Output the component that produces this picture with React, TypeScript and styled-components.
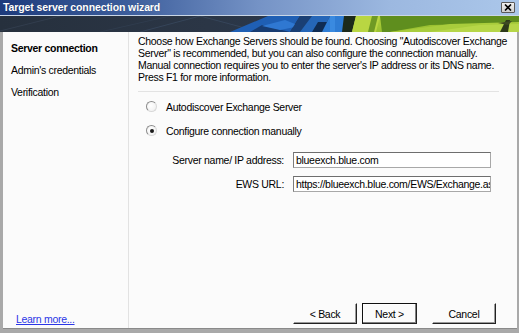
import React from "react";
import styled, { createGlobalStyle } from "styled-components";

const Global = createGlobalStyle`
  html, body { margin: 0; padding: 0; background: #fff; }
  body {
    font-family: "Liberation Sans", Arial, sans-serif;
    font-size: 10.5px;
    letter-spacing: -0.3px;
    color: #000;
  }
  * { box-sizing: border-box; }
`;

const Window = styled.div`
  width: 519px;
  height: 333px;
  display: flex;
  flex-direction: column;
  background: #a9a9a9;
  overflow: hidden;
`;

const TitleBar = styled.div`
  height: 16px;
  flex: none;
  display: flex;
  align-items: center;
  justify-content: space-between;
  padding: 0 4px 1px 3px;
  background: linear-gradient(90deg, #1d3b7c 0%, #3d5e9c 25%, #7593c6 50%, #9cb8e0 75%, #abc7ea 100%);
  border-bottom: 1px solid #c9d6e6;
`;

const Title = styled.span`
  color: #fff;
  font-weight: bold;
  font-size: 10.5px;
  letter-spacing: -0.1px;
  text-shadow: 0 0 1px rgba(0, 0, 0, 0.3);
`;

const CloseButton = styled.div`
  width: 14px;
  height: 11px;
  margin-top: 1px;
  display: flex;
  align-items: center;
  justify-content: center;
  background: linear-gradient(#f2f2f2, #cfcfcf);
  border: 1px solid #5a5a5a;
  border-radius: 1px;
`;

const Banner = styled.svg`
  display: block;
  flex: none;
`;

const Frame = styled.div`
  flex: 1;
  display: flex;
  min-height: 0;
  margin: 0 2px 4px 3px;
  background: #fbfbfb;
  border-bottom: 1px solid #8a8a8a;
`;

const Sidebar = styled.nav`
  width: 126px;
  flex: none;
  display: flex;
  flex-direction: column;
  padding: 10px 0 2px 8px;
  border-right: 1px solid #e2e2e2;
`;

const NavItem = styled.div<{ $active?: boolean }>`
  height: 22px;
  line-height: 13px;
  font-weight: ${(p) => (p.$active ? "bold" : "normal")};
  color: #000;
`;

const LearnMore = styled.a`
  margin-top: auto;
  padding-left: 5px;
  color: #2a36e6;
  text-decoration: underline;
  line-height: 13px;
`;

const Main = styled.main`
  flex: 1;
  display: flex;
  flex-direction: column;
  padding: 3px 0 3px 9px;
`;

const Intro = styled.p`
  margin: 0;
  line-height: 12px;
  white-space: nowrap;
`;

const Separator = styled.hr`
  margin: 8px 18px 0 0;
  border: none;
  border-top: 1px solid #e3e3e3;
  height: 0;
`;

const RadioGroup = styled.div`
  display: flex;
  flex-direction: column;
  gap: 11px;
  padding: 8px 0 0 8px;
`;

const RadioRow = styled.label`
  display: flex;
  align-items: center;
  gap: 9px;
  height: 13px;
`;

const RadioDot = styled.span<{ $checked?: boolean }>`
  width: 11px;
  height: 11px;
  border-radius: 50%;
  border: 1px solid #8c8c8c;
  border-bottom-color: #d8d8d8;
  border-right-color: #d8d8d8;
  background: radial-gradient(circle at 40% 40%, #ffffff 0%, #eeeeee 100%);
  display: flex;
  align-items: center;
  justify-content: center;
  &::after {
    content: "";
    width: 4px;
    height: 4px;
    border-radius: 50%;
    background: ${(p) => (p.$checked ? "#1a1a1a" : "transparent")};
  }
`;

const Fields = styled.div`
  display: grid;
  grid-template-columns: 146px 198px;
  column-gap: 9px;
  row-gap: 8px;
  padding-top: 15px;
`;

const FieldLabel = styled.span`
  text-align: right;
  align-self: center;
  white-space: nowrap;
`;

const TextInput = styled.div`
  height: 16px;
  line-height: 14px;
  padding: 0 2px;
  overflow: hidden;
  white-space: nowrap;
  background: #fff;
  border: 1px solid #a8a8a8;
  border-top-color: #6e6e6e;
  border-left-color: #7c7c7c;
`;

const ButtonRow = styled.div`
  margin-top: auto;
  display: flex;
  align-items: flex-end;
  padding-left: 155px;
  padding-bottom: 1px;
`;

const Button = styled.div<{ $default?: boolean; $gap?: number }>`
  width: ${(p) => (p.$default ? 55 : 64)}px;
  height: 21px;
  margin-left: ${(p) => p.$gap ?? 0}px;
  display: flex;
  align-items: center;
  justify-content: center;
  background: #fbfbfb;
  border: 1px solid ${(p) => (p.$default ? "#111" : "#fbfbfb")};
  border-right-color: #222;
  border-bottom-color: #222;
  box-shadow: ${(p) =>
    p.$default ? "inset -1px -1px 0 #808080, inset 1px 1px 0 #ffffff" : "inset -1px -1px 0 #9a9a9a"};
`;

function BannerArt() {
  return (
    <Banner width="519" height="16" viewBox="0 0 519 16">
      <defs>
        <linearGradient id="dark" x1="0" y1="0" x2="1" y2="0">
          <stop offset="0" stopColor="#26303d" />
          <stop offset="0.4" stopColor="#2b3646" />
          <stop offset="0.9" stopColor="#273a55" />
          <stop offset="1" stopColor="#1f4a84" />
        </linearGradient>
        <linearGradient id="green" x1="0" y1="0" x2="1" y2="1">
          <stop offset="0" stopColor="#b8d43e" />
          <stop offset="0.5" stopColor="#9cc232" />
          <stop offset="1" stopColor="#8bb42a" />
        </linearGradient>
      </defs>
      <rect x="0" y="0" width="519" height="16" fill="url(#dark)" />
      <path d="M0 15 L60 0" stroke="#3a4658" strokeWidth="1" opacity="0.6" />
      <path d="M140 16 L200 0 L260 16" stroke="#3b4b62" strokeWidth="1" fill="none" opacity="0.7" />
      <path d="M100 16 L170 0" stroke="#344255" strokeWidth="1" opacity="0.6" />
      <polygon points="230,16 268,0 300,0 290,16" fill="#1f5fb4" />
      <polygon points="250,16 262,9 290,16" fill="#173c72" />
      <polygon points="262,10 285,4 300,10 280,14" fill="#2f78d2" />
      <polygon points="290,16 300,0 318,0 310,16" fill="#1a3f74" />
      <polygon points="300,16 312,0 330,0 322,16" fill="#2566b8" />
      <polygon points="312,16 318,6 332,6 328,16" fill="#0f2b52" />
      <polygon points="322,16 330,0 346,0 344,16" fill="#2e7cd4" />
      <rect x="330" y="0" width="5" height="16" fill="#3a8ae0" />
      <polygon points="344,0 356,0 352,16 342,16" fill="#1c2a1a" />
      <polygon points="352,16 356,0 519,0 519,16" fill="url(#green)" />
      <polygon points="356,0 380,0 376,16 352,16" fill="#b9d642" />
      <polygon points="372,0 378,0 374,16 368,16" fill="#6f9a24" />
      <polygon points="380,0 519,0 519,7 430,9 390,16 382,16" fill="#5f8e1e" />
      <polygon points="390,16 450,8 519,6 519,16" fill="#a8cc3c" />
      <polygon points="430,16 480,9 519,8 519,16" fill="#b6d648" />
      <polygon points="500,16 506,4 510,4 508,16" fill="#2d3a1a" />
      <polygon points="498,7 512,5 508,9" fill="#3d4a22" />
    </Banner>
  );
}

export default function App() {
  return (
    <>
      <Global />
      <Window>
        <TitleBar>
          <Title>Target server connection wizard</Title>
          <CloseButton>
            <svg width="8" height="7" viewBox="0 0 8 7">
              <path d="M1 0.5 L7 6.5 M7 0.5 L1 6.5" stroke="#000" strokeWidth="1.6" />
            </svg>
          </CloseButton>
        </TitleBar>
        <BannerArt />
        <Frame>
          <Sidebar>
            <NavItem $active>Server connection</NavItem>
            <NavItem>Admin's credentials</NavItem>
            <NavItem>Verification</NavItem>
            <LearnMore>Learn more...</LearnMore>
          </Sidebar>
          <Main>
            <Intro>
              Choose how Exchange Servers should be found. Choosing "Autodiscover Exchange
              <br />
              Server" is recommended, but you can also configure the connection manually.
              <br />
              Manual connection requires you to enter the server's IP address or its DNS name.
              <br />
              Press F1 for more information.
            </Intro>
            <Separator />
            <RadioGroup>
              <RadioRow>
                <RadioDot />
                Autodiscover Exchange Server
              </RadioRow>
              <RadioRow>
                <RadioDot $checked />
                Configure connection manually
              </RadioRow>
            </RadioGroup>
            <Fields>
              <FieldLabel>Server name/ IP address:</FieldLabel>
              <TextInput>blueexch.blue.com</TextInput>
              <FieldLabel>EWS URL:</FieldLabel>
              <TextInput>https://blueexch.blue.com/EWS/Exchange.asmx</TextInput>
            </Fields>
            <ButtonRow>
              <Button>&lt; Back</Button>
              <Button $default $gap={5}>Next &gt;</Button>
              <Button $gap={15}>Cancel</Button>
            </ButtonRow>
          </Main>
        </Frame>
      </Window>
    </>
  );
}
